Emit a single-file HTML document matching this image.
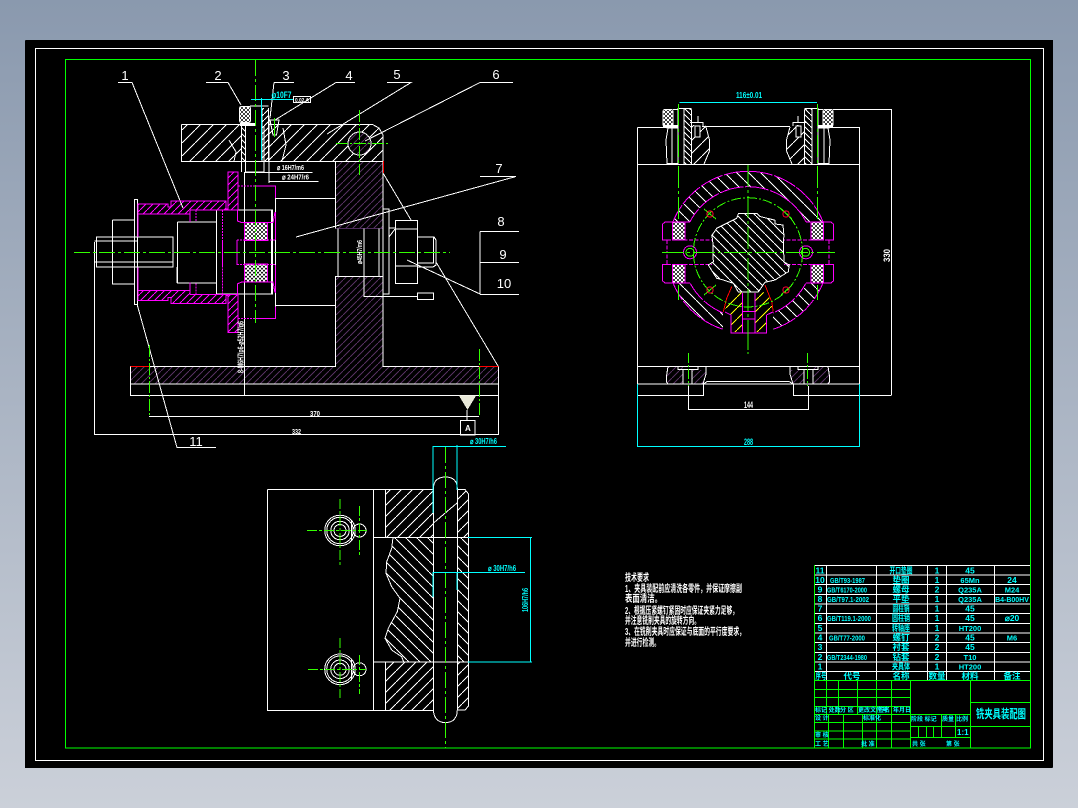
<!DOCTYPE html>
<html><head><meta charset="utf-8"><style>
html,body{margin:0;padding:0;width:1078px;height:808px;overflow:hidden}
svg{display:block}
text{font-family:"Liberation Sans","Noto Sans CJK SC",sans-serif;font-weight:700}
.l{font-family:"Liberation Sans",sans-serif;font-weight:400;font-size:13px;fill:#fff;text-anchor:middle}
.d{font-size:7.5px;fill:#fff}
.c{font-size:8px;fill:#0ff}
.t{font-size:8.5px;fill:#0ff;text-anchor:middle}
.s{font-size:7px;fill:#0ff;text-anchor:start}
.n{font-size:10px;fill:#fff}
.u{font-size:6px;fill:#0ff;text-anchor:start}
</style></head><body>
<svg width="1078" height="808" viewBox="0 0 1078 808" xmlns="http://www.w3.org/2000/svg" shape-rendering="crispEdges">
<defs>
<linearGradient id="bg" x1="0" y1="0" x2="0" y2="1"><stop offset="0" stop-color="#8a99ae"/><stop offset="1" stop-color="#cbd0d9"/></linearGradient>
<pattern id="uw13" width="13" height="13" patternUnits="userSpaceOnUse"><path d="M-1 14L14 -1" stroke="#fff"/></pattern>
<pattern id="uw11" width="11" height="11" patternUnits="userSpaceOnUse"><path d="M-1 12L12 -1" stroke="#fff"/></pattern>
<pattern id="uw6" width="6" height="6" patternUnits="userSpaceOnUse"><path d="M-1 7L7 -1" stroke="#fff"/></pattern>
<pattern id="dw6" width="6" height="6" patternUnits="userSpaceOnUse"><path d="M-1 -1L7 7" stroke="#fff"/></pattern>
<pattern id="dw12" width="12" height="12" patternUnits="userSpaceOnUse"><path d="M-1 -1L13 13" stroke="#fff"/></pattern>
<pattern id="dw9" width="9" height="9" patternUnits="userSpaceOnUse"><path d="M-1 -1L10 10" stroke="#fff"/></pattern>
<pattern id="dw11" width="11" height="11" patternUnits="userSpaceOnUse"><path d="M-1 -1L12 12" stroke="#fff"/></pattern>
<pattern id="up7" width="7" height="7" patternUnits="userSpaceOnUse"><path d="M-1 8L8 -1" stroke="#55305f"/></pattern>
<pattern id="um7" width="7" height="7" patternUnits="userSpaceOnUse"><path d="M-1 8L8 -1" stroke="#f0f"/></pattern>
<pattern id="uy11" width="11" height="11" patternUnits="userSpaceOnUse"><path d="M-1 12L12 -1" stroke="#ff0"/></pattern>
<pattern id="xx" width="4" height="4" patternUnits="userSpaceOnUse"><rect width="4" height="4" fill="#000"/><path d="M0 0L4 4M4 0L0 4" stroke="#fff" stroke-width="1.2"/></pattern>
<clipPath id="ann"><rect x="660" y="165" width="176" height="57"/><rect x="660" y="283.5" width="63" height="60"/><rect x="773" y="283.5" width="63" height="60"/></clipPath>
</defs>
<rect width="1078" height="808" fill="url(#bg)"/>
<rect x="25" y="40" width="1028" height="728" fill="#000" rx="1"/>
<rect x="35.5" y="48.5" width="1008" height="712" fill="none" stroke="#fff"/>
<rect x="65.5" y="59.5" width="965" height="688.5" fill="none" stroke="#0f0"/>

<!-- hatches -->
<path fill="url(#up7)" d="M335.5 161.5H383V228.5H335.5ZM335.5 276.5H383V366.5H335.5ZM130.5 366.5H335.5V384H130.5ZM383 366.5H498.5V384H383ZM335.5 366.5H383V384H335.5ZM668 366.5L666.5 376V382L668 384H683V366.5ZM692 370H706L706 374L703 384H692ZM828 366.5L829.5 376V382L828 384H813V366.5ZM804 370H790V374L793 384H804Z"/>
<circle cx="359.5" cy="143.5" r="11" fill="#000"/><circle cx="359.5" cy="143.5" r="11" fill="url(#up7)"/>
<path fill="url(#uw13)" d="M181.5 124.5H241V161.5H181.5ZM269 124.5H372.5L379 128L383 135V161.5H348V154H371V133H348V124.5H269V161.5H348V124.5Z"/>
<path fill="url(#uw13)" d="M269 124.5H348V161.5H269ZM348 124.5H372.5L379 128L383 135V161.5H348Z" fill-rule="evenodd"/>
<circle cx="359.5" cy="143.5" r="11" fill="#000"/><circle cx="359.5" cy="143.5" r="11" fill="url(#up7)"/>
<rect x="262" y="108" width="6.5" height="53" fill="url(#uw6)"/>
<rect x="241.5" y="125" width="4" height="36" fill="url(#dw6)"/>
<rect x="684" y="108.5" width="7.5" height="55.5" fill="url(#dw6)"/>
<rect x="804.5" y="108.5" width="7.5" height="55.5" fill="url(#dw6)"/>
<path fill="url(#um7)" d="M138 204H168V207H171V201H226V209H228V172H238V210H190V214H138ZM138 300.7H168V297.7H171V303.7H226V295.7H228V332.7H238V294.7H190V290.7H138Z"/>
<path fill="url(#uw13)" d="M691.5 125H706L709.5 140V151L704 164H691.5ZM804.5 125H790L786.5 140V151L792 164H804.5Z"/>
<g clip-path="url(#ann)"><path fill="url(#dw12)" fill-rule="evenodd" d="M667 252.3a81 81 0 1 0 162 0a81 81 0 1 0 -162 0ZM682.4 252.3a65.6 65.6 0 1 0 131.2 0a65.6 65.6 0 1 0 -131.2 0Z"/></g>
<path fill="url(#dw9)" d="M738.5 213.5H757L760 216.5L774.3 220L775 220.5L775 224L783 225L784 236L783.3 240L784 262L789.3 265L788.3 271.7L775 280L765 282.3L758.3 292H738.3L733.3 283.3L723.3 280L716.7 278.3L708.3 265L713.3 261.7L712.7 240L711.7 235.7L716.7 228.3L723.3 225L736.7 218.3Z"/>
<path fill="url(#uy11)" d="M735 290L742.3 293V332H731V315L725 311.7L728 298ZM761 290L755 293V332H766V315L773 311.7L770 298Z"/>
<path fill="url(#uw11)" d="M385.5 489.5H433V537.5H385.5ZM457 489.5H465L468.5 494V537.5H457ZM385.5 662H433V710H385.5ZM457 662H468.5V706L465 710H457Z"/>
<path fill="url(#dw11)" d="M393 537.5L391.7 548.3L386.7 561.7L386 573.3L391.7 586.7L400 598.3L397.3 611.7L388.3 628.3L385 638.3L391.7 650L401.7 656.7L403.7 662H433V537.5ZM457 537.5H468.5V662H457Z"/>

<!-- LEFT VIEW -->
<g fill="none" stroke="#fff">
<path d="M335.5 228.5H383" stroke="#4d2c5c"/>
<path d="M181.5 124.5H241M269 124.5H372.5L379 128L383 135V161.5H181.5V124.5"/>
<path d="M241.5 124.5V172M245.5 126V172H264V126M269 118V183M229 140L236 152L234 161M283 128L286 145L282 161"/>
<path d="M262 108V161M268.5 108V161M250 106H268.5M250 106V108"/>
<rect x="239.5" y="106.5" width="11" height="16" rx="2" fill="url(#xx)"/>
<rect x="240" y="123" width="15" height="3" fill="#fff" stroke="none"/>
<path d="M269 120H279L276.5 135H273L270 120"/>
<circle cx="359.5" cy="143.5" r="11.5" stroke="#fff"/>
<path d="M245 172.5H312.5M269 181.5H318.5"/>
<path d="M335.5 161.5V228.5M383 135V366.5H498.5V395.5H130.5V366.5H335.5V276.5H383"/>
<path d="M130.5 384H498.5"/>
<path d="M338 228.5V276.5M364 276.5V296.5H417M364 228.5V276.5M379 228.5V276.5M383 209H389V294H383M389 228H395"/>
<path d="M275.5 198.5H335.5M275.5 305.5H335.5M275.5 198V318"/>
<path d="M395.5 220.5H417.5V283.5H395.5ZM395.5 229H417.5M395.5 266H417.5M417.5 237H434L436 240V265L433 267H417.5M395 229L389 237"/>
<path d="M417.5 263H433.5V237"/>
<rect x="417.5" y="293" width="16" height="6.5"/>
<path d="M94.5 242V435M96.5 237H173V267H96.5ZM94.5 241H137M94.5 262H173M112.5 220H134M112.5 220V284H134M134.5 199.5V304.5H137.5V199.5Z"/>
<path d="M177.5 222H216.5M177.5 222V283H216.5M173 240V266M177 283V267"/>
<path d="M216.5 210H272.5V294H216.5Z"/>
<path d="M244.5 172V396M271.5 210V294"/>
<path d="M149 416.5H479M94.5 434.5H498.5V384M467 410V420"/>
<rect x="460.5" y="420.5" width="14.5" height="14.5"/>
<path d="M118 82.5H132L183 208M206 82.5H228L241 105M274 82.5H294M274 82.5L270 118M336 82.5H355M336 82.5L275 120M387 82.5H411L327 134M480 82.5H513M480 82.5L365 141M480 176.5H516L296 237M383 173L411 220M407 260L480 294M436 262L498 366M137 304L177 447.5H216M480 231.5H519M480 262.5H519M480 294.5H519M480 231.5V294.5"/>
</g>
<path d="M459 395.7H476L467.5 410Z" fill="#e8e8d8"/>
<g id="mag" fill="none" stroke="#f0f">
<path d="M138 204H168V207H171V201H226V209H228V172H238V210H190V214H138Z"/>
<path d="M138 214V237M190 210V222"/>
<path d="M196 210V222M222.5 210V240M238 186H254" stroke-dasharray="2 1"/>
<path d="M254 186H275.5V198M237.5 210V221L242 222.7H273L275 212"/>
<rect x="244.5" y="222.5" width="23" height="18" fill="url(#xx)"/>
<path d="M237 240H275" stroke-dasharray="2 1"/>
</g>
<use href="#mag" transform="translate(0,504.7) scale(1,-1)"/>
<path d="M222.5 240V266M237 240V265M275.5 212V240M275.5 265V293" stroke="#f0f" fill="none"/>
<path d="M130.5 366.5H149M479 366.5H498.5M383.5 161V173" stroke="#f00" fill="none"/>
<g fill="none" stroke="#3f0">
<path d="M74 252.5H450" stroke-dasharray="16 3 3 3"/>
<path d="M255.5 60V323" stroke-dasharray="16 3 3 3"/>
<path d="M274.5 118V137"/>
<path d="M336 143.5H389M359.5 110V175" stroke-dasharray="12 2 2 2"/>
<path d="M149.5 345V417M479.5 349V417" stroke-dasharray="12 2 2 2"/>
</g>
<path d="M251 99.5H293M261.5 98V160" stroke="#0ff" fill="none"/>
<rect x="293.5" y="96.5" width="17" height="6" fill="none" stroke="#fff"/>
<text class="c" x="271.5" y="98" textLength="20" lengthAdjust="spacingAndGlyphs" style="font-size:9px">φ10F7</text>
<text class="s" x="295" y="102" style="fill:#fff;font-size:5.5px" textLength="14" lengthAdjust="spacingAndGlyphs">0.02 A</text>
<text class="l" x="125" y="80">1</text><text class="l" x="218" y="80">2</text><text class="l" x="286" y="80">3</text><text class="l" x="349" y="80">4</text><text class="l" x="397" y="79">5</text><text class="l" x="496" y="79">6</text><text class="l" x="499" y="173">7</text><text class="l" x="501" y="226">8</text><text class="l" x="503" y="259">9</text><text class="l" x="504" y="288">10</text><text class="l" x="196" y="446">11</text>
<text class="d" x="277" y="170" textLength="27" lengthAdjust="spacingAndGlyphs">⌀ 16H7/m6</text>
<text class="d" x="282" y="179.5" textLength="27" lengthAdjust="spacingAndGlyphs">⌀ 24H7/r6</text>
<text class="d" x="0" y="0" transform="translate(243.5,373) rotate(-90)" textLength="52" lengthAdjust="spacingAndGlyphs" style="font-size:8.5px">8-M6H7/p6-⌀52H7/g6</text>
<text class="d" x="0" y="0" transform="translate(362,264) rotate(-90)" textLength="24" lengthAdjust="spacingAndGlyphs">⌀45H7/m6</text>
<text class="d" x="310" y="416" textLength="10" lengthAdjust="spacingAndGlyphs">370</text>
<text class="d" x="292" y="434" textLength="9" lengthAdjust="spacingAndGlyphs">332</text>
<text class="d" x="465" y="431" style="font-size:8px">A</text>

<!-- RIGHT VIEW -->
<g fill="none" stroke="#fff">
<path d="M637.5 127.5H678M818 127.5H859.5V384M637.5 127.5V384M637.5 164.5H859.5M702 126.5H790M637.5 366.5H859.5M637.5 384H859.5M637.5 395.5H703.5V384M793.5 384V395.5H891.5M703.5 384L707 381.5H789L793 384M688.5 386V410M808.5 386V410M688.5 409.5H808.5M833 109.5H891.5V395"/>
</g>
<g id="rt" fill="none" stroke="#fff">
<rect x="663" y="109.5" width="10" height="17" rx="2" fill="url(#xx)"/>
<rect x="663" y="125" width="15" height="3" fill="#fff" stroke="none"/>
<path d="M673 109.5H678V108.5H688.5L691.5 110V164M666.5 128H678M668 128L666 140L667 163.5H678M672 128V163"/>
<path d="M684 108.5H691.5M678 108.5V164M684 108.5V164"/>
<path d="M698 116V122M690 122.5H703V126"/>
<path d="M706 127L709.5 140V151L704 164"/>
<rect x="695" y="126" width="5" height="11" fill="#000" stroke="#fff"/>
<path d="M668 366.5L666.5 376V382L668 384M706 366.5V374L703 384M683 370V384M692 370V384M678 366.5V369.5H698V366.5"/>
</g>
<use href="#rt" transform="translate(1496,0) scale(-1,1)"/>
<g fill="none" stroke="#f0f" clip-path="url(#ann)">
<circle cx="748" cy="252.3" r="81" stroke-dasharray="24 1.5"/>
<circle cx="748" cy="252.3" r="65.6" stroke-dasharray="24 1.5"/>
</g>
<g id="sl" fill="none" stroke="#f0f">
<rect x="672.5" y="222" width="12.5" height="18" fill="url(#xx)"/>
<rect x="672.5" y="264.5" width="12.5" height="18.5" fill="url(#xx)"/>
<path d="M672 222H665L662.7 224V240H667M672 283H665L662.7 281V264.5H667M685 222H690M685 283H690"/>
<path d="M667 240H712M667 264.5H712M667 240V252M667 264V254" stroke-dasharray="4 1.5"/>
<circle cx="690" cy="252.3" r="6.5"/>
</g>
<use href="#sl" transform="translate(1496,0) scale(-1,1)"/>
<path d="M738.5 213.5H757L760 216.5L774.3 220L775 220.5L775 224L783 225L784 236L783.3 240L784 262L789.3 265L788.3 271.7L775 280L765 282.3L758.3 292H738.3L733.3 283.3L723.3 280L716.7 278.3L708.3 265L713.3 261.7L712.7 240L711.7 235.7L716.7 228.3L723.3 225L736.7 218.3Z" fill="none" stroke="#fff"/>
<path d="M731.7 286.7L726.7 298.3L723.3 311.7M765 285L771.7 301.7L773.3 311.7" fill="none" stroke="#f00"/>
<path d="M742.3 293V333M755 293V333M742.3 311.7H755M742.3 319H755M731 315V333H766.5V315M725 312L731 315M773 312L766.5 315" fill="none" stroke="#f0f"/>
<g fill="none" stroke="#3f0">
<circle cx="748" cy="252.3" r="54.6" stroke-dasharray="10 2 2 2"/>
<path d="M662 252.5H835" stroke-dasharray="22 3 3 3"/>
<path d="M748 165V340" stroke-dasharray="22 3 3 3"/>
<path d="M678.5 104V222M817.5 104V222M678.5 285V300M817.5 285V300" stroke-dasharray="22 3 3 3"/>
<path d="M688.5 353V386M807.5 353V386M748 340V356" stroke-dasharray="10 2 2 2"/>
<circle cx="690" cy="252.3" r="4"/><circle cx="805.5" cy="252.3" r="4"/>
<path d="M704 209L716 219M792 219L781 209M704 295L716 285M792 285L781 295"/>
</g>
<g fill="none" stroke="#f03"><circle cx="710" cy="214" r="3.2"/><circle cx="786" cy="214" r="3.2"/><circle cx="710" cy="290" r="3.2"/><circle cx="786" cy="290" r="3.2"/></g>
<path d="M679.5 102.5H817M637.5 384V446.5H859.5V384" fill="none" stroke="#0ff"/>
<text class="c" x="736" y="98" textLength="26" lengthAdjust="spacingAndGlyphs">116±0.01</text>
<text class="c" x="744" y="445" textLength="9" lengthAdjust="spacingAndGlyphs" style="font-size:9px">288</text>
<text class="d" x="744" y="408" textLength="9" lengthAdjust="spacingAndGlyphs" style="font-size:9px">144</text>
<text class="d" x="0" y="0" transform="translate(890,262) rotate(-90)" textLength="13" lengthAdjust="spacingAndGlyphs" style="font-size:9px">330</text>

<!-- BOTTOM VIEW -->
<g fill="none" stroke="#fff">
<path d="M457 489.5H465L468.5 494V706L465 710H457"/>
<path d="M393 537.5L391.7 548.3L386.7 561.7L386 573.3L391.7 586.7L400 598.3L397.3 611.7L388.3 628.3L385 638.3L391.7 650L401.7 656.7L403.7 662"/>
<path d="M267.5 489.5H433M267.5 489.5V710.5H433M373.5 489.5V710.5M385.5 489.5V537.5M385.5 662V710.5M373.5 537.5H468.5M373.5 662H468.5"/>
<path d="M433.5 488V710C433.5 718 438 722.6 445.5 722.6C453 722.6 457.3 718 457.3 710V488C457.3 481 453 477 445.5 477C438 477 433.5 481 433.5 488Z"/>
<path d="M433.5 523L457 503"/>
<g id="sc"><circle cx="340" cy="530.5" r="15.3"/><circle cx="340" cy="530.5" r="13.3"/><circle cx="340" cy="530.5" r="9.3"/><circle cx="340" cy="530.5" r="6"/><circle cx="359.5" cy="530.5" r="6.5"/><path d="M351.5 520V541"/></g>
<use href="#sc" transform="translate(0,138.8)"/>
</g>
<g fill="none" stroke="#3f0">
<path d="M445.5 447V748" stroke-dasharray="16 3 3 3"/>
<path d="M307 530.5H367M340 499V567M359.5 506V555M308 669.5H366M340 638V698M359.5 655V694" stroke-dasharray="10 2 3 2"/>
</g>
<path d="M433 446V513M457 445V490M433 446.5H506M468 537.5H532M468 662H532M530.5 537.5V662M433 572.5H525M433 572V597M457 572V590" fill="none" stroke="#0ff"/>
<text class="c" x="470" y="444" textLength="27" lengthAdjust="spacingAndGlyphs">⌀ 30H7/h6</text>
<text class="c" x="488" y="571" textLength="28" lengthAdjust="spacingAndGlyphs">⌀ 30H7/h6</text>
<text class="c" x="0" y="0" transform="translate(528,612) rotate(-90)" textLength="24" lengthAdjust="spacingAndGlyphs">106H7/h6</text>

<!-- TECH TEXT -->
<text class="n" x="625" y="581" textLength="24" lengthAdjust="spacingAndGlyphs">技术要求</text>
<text class="n" x="625" y="592" textLength="117" lengthAdjust="spacingAndGlyphs">1、夹具装配前应清洗各零件，并保证摩擦副</text>
<text class="n" x="625" y="602" textLength="37" lengthAdjust="spacingAndGlyphs">表面清洁。</text>
<text class="n" x="625" y="614" textLength="113" lengthAdjust="spacingAndGlyphs">2、根据压紧螺钉紧固时应保证夹紧力足够，</text>
<text class="n" x="625" y="624" textLength="75" lengthAdjust="spacingAndGlyphs">并注意铣削夹具的旋转方向。</text>
<text class="n" x="625" y="635" textLength="120" lengthAdjust="spacingAndGlyphs">3、在铣削夹具时应保证与底面的平行度要求，</text>
<text class="n" x="625" y="646" textLength="35" lengthAdjust="spacingAndGlyphs">并进行检测。</text>

<!-- TABLE -->
<g fill="none" stroke="#fff">
<path d="M814.5 565.5H1030M814.5 575H1030M814.5 584.5H1030M814.5 594.5H1030M814.5 604H1030M814.5 613.5H1030M814.5 623.5H1030M814.5 633H1030M814.5 642.5H1030M814.5 652.5H1030M814.5 662H1030M814.5 671.5H1030"/>
<path d="M814.5 565V680M826.5 565V680M876.5 565V680M927.5 565V680M946.5 565V680M994.5 565V680"/>
</g>
<g fill="none" stroke="#0f0">
<path d="M814.5 680.5H1030M814.5 565V748M814.5 689.5H910.5M814.5 697.5H910.5M814.5 706.5H910.5M814.5 714.5H970M814.5 722.5H910.5M814.5 731H910.5M814.5 739H910.5M910.5 726.5H970M910.5 737.5H970M970 702.5H1030M970 726.5H1030"/>
<path d="M826.5 680V714M838.5 680V714M857.5 680V714M876.5 680V748M891.5 680V748M910.5 680V748M970.5 680V748M828.5 714V748M843.5 714V748M862.5 714V748M941.5 714V737M955.5 714V737M918.5 727V737M926.5 727V737M933.5 727V737"/>
</g>
<path d="M800 748H1030" stroke="#0f0"/>
<text class="t" x="820" y="573.5">11</text><text class="t" x="901" y="573.5" textLength="23" lengthAdjust="spacingAndGlyphs">开口垫圈</text><text class="t" x="937" y="573.5">1</text><text class="t" x="970" y="573.5">45</text>
<text class="t" x="820" y="583">10</text><text class="s" x="830" y="583" textLength="35" lengthAdjust="spacingAndGlyphs">GB/T93-1987</text><text class="t" x="901" y="583">垫圈</text><text class="t" x="937" y="583">1</text><text class="t" x="970" y="583" style="font-size:7.5px">65Mn</text><text class="t" x="1012" y="583">24</text>
<text class="t" x="820" y="592.5">9</text><text class="s" x="827" y="592.5" textLength="40" lengthAdjust="spacingAndGlyphs">GB/T6170-2000</text><text class="t" x="901" y="592.5">螺母</text><text class="t" x="937" y="592.5">2</text><text class="t" x="970" y="592.5" style="font-size:7.5px">Q235A</text><text class="t" x="1012" y="592.5" style="font-size:7.5px">M24</text>
<text class="t" x="820" y="602">8</text><text class="s" x="827" y="602" textLength="42" lengthAdjust="spacingAndGlyphs">GB/T97.1-2002</text><text class="t" x="901" y="602">平垫</text><text class="t" x="937" y="602">1</text><text class="t" x="970" y="602" style="font-size:7.5px">Q235A</text><text class="t" x="1012" y="602" style="font-size:7px">B4-B00HV</text>
<text class="t" x="820" y="611.5">7</text><text class="t" x="901" y="611.5" textLength="17" lengthAdjust="spacingAndGlyphs">圆柱销</text><text class="t" x="937" y="611.5">1</text><text class="t" x="970" y="611.5">45</text>
<text class="t" x="820" y="621">6</text><text class="s" x="827" y="621" textLength="44" lengthAdjust="spacingAndGlyphs">GB/T119.1-2000</text><text class="t" x="901" y="621" textLength="18" lengthAdjust="spacingAndGlyphs">圆柱销</text><text class="t" x="937" y="621">1</text><text class="t" x="970" y="621">45</text><text class="t" x="1012" y="621">⌀20</text>
<text class="t" x="820" y="631">5</text><text class="t" x="901" y="631" textLength="18" lengthAdjust="spacingAndGlyphs">转轴座</text><text class="t" x="937" y="631">1</text><text class="t" x="970" y="631" style="font-size:7.5px">HT200</text>
<text class="t" x="820" y="640.5">4</text><text class="s" x="829" y="640.5" textLength="36" lengthAdjust="spacingAndGlyphs">GB/T77-2000</text><text class="t" x="901" y="640.5">螺钉</text><text class="t" x="937" y="640.5">2</text><text class="t" x="970" y="640.5">45</text><text class="t" x="1012" y="640.5" style="font-size:7.5px">M6</text>
<text class="t" x="820" y="650">3</text><text class="t" x="901" y="650">衬套</text><text class="t" x="937" y="650">2</text><text class="t" x="970" y="650">45</text>
<text class="t" x="820" y="660">2</text><text class="s" x="827" y="660" textLength="40" lengthAdjust="spacingAndGlyphs">GB/T2344-1980</text><text class="t" x="901" y="660">钻套</text><text class="t" x="937" y="660">2</text><text class="t" x="970" y="660" style="font-size:7.5px">T10</text>
<text class="t" x="820" y="669.5">1</text><text class="t" x="901" y="669.5" textLength="18" lengthAdjust="spacingAndGlyphs">夹具体</text><text class="t" x="937" y="669.5">1</text><text class="t" x="970" y="669.5" style="font-size:7.5px">HT200</text>
<text class="t" x="821" y="679" textLength="11" lengthAdjust="spacingAndGlyphs">序号</text><text class="t" x="852" y="679">代号</text><text class="t" x="901" y="679">名称</text><text class="t" x="937" y="679">数量</text><text class="t" x="970" y="679">材料</text><text class="t" x="1012" y="679">备注</text>
<text class="u" x="815" y="712">标记 处数</text><text class="u" x="840" y="712">分 区</text><text class="u" x="858" y="712">更改文件号</text><text class="u" x="878" y="712">签名</text><text class="u" x="893" y="712">年月日</text>
<text class="u" x="815" y="720">设 计</text><text class="u" x="863" y="720">标准化</text>
<text class="u" x="815" y="737">审 核</text><text class="u" x="815" y="746">工 艺</text><text class="u" x="861" y="746">批 准</text>
<text class="u" x="911" y="721">阶段 标记</text><text class="u" x="942" y="721">质量</text><text class="u" x="956" y="721">比例</text>
<text class="u" x="957" y="735" style="font-size:8px">1:1</text>
<text class="u" x="912" y="746">共 张</text><text class="u" x="946" y="746">第 张</text>
<text class="t" x="1001" y="718" textLength="50" lengthAdjust="spacingAndGlyphs" style="font-size:12px">铣夹具装配图</text>
</svg>
</body></html>
